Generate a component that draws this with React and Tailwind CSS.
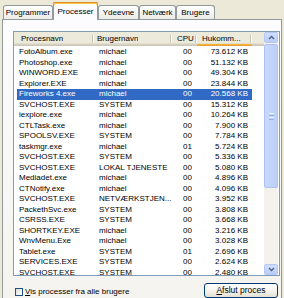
import React from "react";

const rows = [
  ["FotoAlbum.exe", "michael", "00", "73.612 KB"],
  ["Photoshop.exe", "michael", "00", "51.132 KB"],
  ["WINWORD.EXE", "michael", "00", "49.304 KB"],
  ["Explorer.EXE", "michael", "00", "23.844 KB"],
  ["Fireworks 4.exe", "michael", "00", "20.568 KB"],
  ["SVCHOST.EXE", "SYSTEM", "00", "15.312 KB"],
  ["iexplore.exe", "michael", "00", "10.264 KB"],
  ["CTLTask.exe", "michael", "00", "7.900 KB"],
  ["SPOOLSV.EXE", "SYSTEM", "00", "7.784 KB"],
  ["taskmgr.exe", "michael", "01", "5.724 KB"],
  ["SVCHOST.EXE", "SYSTEM", "00", "5.336 KB"],
  ["SVCHOST.EXE", "LOKAL TJENESTE", "00", "5.080 KB"],
  ["Mediadet.exe", "michael", "00", "4.896 KB"],
  ["CTNotify.exe", "michael", "00", "4.096 KB"],
  ["SVCHOST.EXE", "NETVÆRKSTJEN...", "00", "3.952 KB"],
  ["PackethSvc.exe", "SYSTEM", "00", "3.808 KB"],
  ["CSRSS.EXE", "SYSTEM", "00", "3.668 KB"],
  ["SHORTKEY.EXE", "michael", "00", "3.216 KB"],
  ["WnvMenu.Exe", "michael", "00", "3.028 KB"],
  ["Tablet.exe", "SYSTEM", "01", "2.696 KB"],
  ["SERVICES.EXE", "SYSTEM", "00", "2.624 KB"],
  ["SVCHOST.EXE", "SYSTEM", "00", "2.480 KB"],
];

const SELECTED = 4;

const tabBase =
  "flex items-center justify-center rounded-t-[3px] border border-b-0 border-[#919b9c] text-[8px]";

function Tab({ label, width, active }) {
  if (active) {
    return (
      <div
        className={`${tabBase} relative z-10 mb-[-1px] h-[18px] border-t-0 bg-[#fcfcfe] shadow-[inset_0_2px_0_#ffc83c]`}
        style={{ width }}
      >
        <div className="absolute inset-x-[-1px] top-0 h-px rounded-t-[3px] bg-[#e68b2c]" />
        <span className="pt-[1px]">{label}</span>
      </div>
    );
  }
  return (
    <div
      className={`${tabBase} h-[14px] bg-gradient-to-b from-white to-[#ecebe6]`}
      style={{ width }}
    >
      {label}
    </div>
  );
}

function HeaderCell({ label, className, hot }) {
  return (
    <div
      className={`flex h-full items-center justify-between ${className} ${
        hot
          ? "shadow-[inset_0_-1px_0_#e5a03c,inset_0_-2px_0_#f8b330]"
          : ""
      }`}
    >
      <span className="truncate">{label}</span>
      <span className="flex h-[8px] shrink-0">
        <span className="w-px bg-[#c7c5b2]" />
        <span className="w-px bg-white" />
      </span>
    </div>
  );
}

function Chevron({ up }) {
  return (
    <svg width="7" height="5" viewBox="0 0 7 5">
      <path
        d={up ? "M1 4 L3.5 1.5 L6 4" : "M1 1 L3.5 3.5 L6 1"}
        fill="none"
        stroke="#4d6185"
        strokeWidth="1.4"
      />
    </svg>
  );
}

function ScrollBar() {
  return (
    <div className="flex w-[14px] flex-col bg-[#f3f2ec]">
      <div className="flex h-[11px] items-center justify-center rounded-[2px] border border-[#b5c8f3] bg-gradient-to-b from-[#d2defd] to-[#b9cdf8]">
        <Chevron up />
      </div>
      <div className="mt-[1px] flex h-[144px] items-center justify-center rounded-[2px] border border-[#adc2f2] bg-gradient-to-r from-[#c9d8fc] to-[#bdd0fa]">
        <div className="flex flex-col gap-[1px]">
          <span className="h-px w-[5px] bg-[#eef3fe]" />
          <span className="h-px w-[5px] bg-[#8cb0f8]" />
          <span className="h-px w-[5px] bg-[#eef3fe]" />
          <span className="h-px w-[5px] bg-[#8cb0f8]" />
        </div>
      </div>
      <div className="flex-1" />
      <div className="flex h-[11px] items-center justify-center rounded-[2px] border border-[#b5c8f3] bg-gradient-to-b from-[#d2defd] to-[#b9cdf8]">
        <Chevron />
      </div>
    </div>
  );
}

export default function App() {
  return (
    <div className="h-[298px] w-[284px] overflow-hidden bg-[#ece9d8] font-['Liberation_Sans',Arial,sans-serif] text-black">
      <div className="flex h-[19px] items-end pl-[3px]">
        <Tab label="Programmer" width={50} />
        <Tab label="Processer" width={45} active />
        <Tab label="Ydeevne" width={41} />
        <Tab label="Netværk" width={37} />
        <Tab label="Brugere" width={39} />
      </div>

      <div className="ml-[2px] flex h-[290px] w-[280px] flex-col border border-[#919b9c] bg-gradient-to-b from-[#fcfcfe] to-[#f4f3ee]">
        <div className="ml-[10px] mr-px mt-[11px] flex h-[245px] border border-[#7f9db9] bg-white">
          <div className="flex w-[250px] flex-col overflow-hidden text-[8px]">
            <div className="flex h-[14px] shrink-0 bg-[#ebeadb] shadow-[inset_0_-1px_0_#cbc7b8,inset_0_-2px_0_#d6d2c2,inset_0_-3px_0_#e2decd]">
              <HeaderCell label="Procesnavn" className="w-[80px] pl-[7px]" />
              <HeaderCell label="Brugernavn" className="w-[78px] pl-[3px]" />
              <HeaderCell label="CPU" className="w-[25px] pl-[5px]" />
              <HeaderCell label="Hukomm..." className="w-[55px] pl-[5px]" hot />
              <div className="flex-1" />
            </div>
            <div className="flex flex-col pt-[1px]">
              {rows.map((r, i) => (
                <div
                  key={i}
                  className={`ml-[3px] flex h-[10.5px] w-[235px] shrink-0 items-center leading-none whitespace-nowrap ${
                    i === SELECTED ? "bg-[#316ac5] text-white" : ""
                  }`}
                >
                  <span className="w-[77px] pl-[2px]">{r[0]}</span>
                  <span className="w-[78px] pl-[5px]">{r[1]}</span>
                  <span className="w-[25px] pr-[5px] text-right">{r[2]}</span>
                  <span className="w-[55px] pr-[4px] text-right">{r[3]}</span>
                </div>
              ))}
            </div>
          </div>
          <ScrollBar />
        </div>

        <div className="mt-[7px] flex items-start justify-between pl-[12px] pr-[3px]">
          <label className="mt-[3px] flex items-center gap-[2px] text-[8px]">
            <span className="h-[8px] w-[8px] border border-[#1c5180] bg-gradient-to-br from-[#dcdcd7] to-white" />
            <span>
              <span className="underline">V</span>is processer fra alle brugere
            </span>
          </label>
          <button
            type="button"
            className="flex h-[15px] w-[74px] items-center justify-center rounded-[3px] border border-[#003c74] bg-gradient-to-b from-white via-[#f5f4ef] to-[#e3e0d3] text-[8.5px]"
          >
            <span>
              <span className="underline">A</span>fslut proces
            </span>
          </button>
        </div>
      </div>
    </div>
  );
}
